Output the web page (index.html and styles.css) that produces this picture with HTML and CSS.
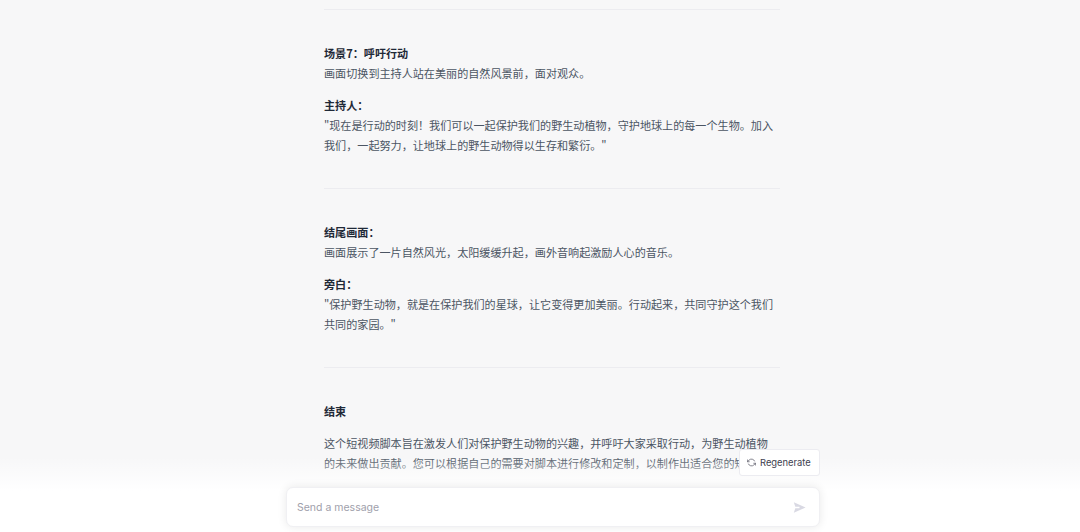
FILE: index.html
```html
<!DOCTYPE html>
<html lang="zh">
<head>
<meta charset="utf-8">
<title>Chat</title>
<link rel="stylesheet" href="styles.css">
</head>
<body>
<main class="thread">
  <article class="answer">
    <hr class="rule">
    <p class="para"><strong>场景7&#xFF1A;呼吁行动</strong><br>画面切换到主持人站在美丽的自然风景前&#xFF0C;面对观众。</p>
    <p class="para"><strong>主持人&#xFF1A;</strong><br>"现在是行动的时刻&#xFF01;我们可以一起保护我们的野生动植物&#xFF0C;守护地球上的每一个生物。加入我们&#xFF0C;一起努力&#xFF0C;让地球上的野生动物得以生存和繁衍。"</p>
    <hr class="rule">
    <p class="para"><strong>结尾画面&#xFF1A;</strong><br>画面展示了一片自然风光&#xFF0C;太阳缓缓升起&#xFF0C;画外音响起激励人心的音乐。</p>
    <p class="para"><strong>旁白&#xFF1A;</strong><br>"保护野生动物&#xFF0C;就是在保护我们的星球&#xFF0C;让它变得更加美丽。行动起来&#xFF0C;共同守护这个我们共同的家园。"</p>
    <hr class="rule">
    <p class="para"><strong>结束</strong></p>
    <p class="para">这个短视频脚本旨在激发人们对保护野生动物的兴趣&#xFF0C;并呼吁大家采取行动&#xFF0C;为野生动植物的未来做出贡献。您可以根据自己的需要对脚本进行修改和定制&#xFF0C;以制作出适合您的短片</p>
  </article>
</main>
<footer class="composer">
  <div class="actions">
    <button class="regen" type="button">
      <svg class="regen-icon" viewBox="0 0 24 24" aria-hidden="true"><path d="M1 4v6h6M23 20v-6h-6"/><path d="M20.5 9A9 9 0 0 0 5.6 5.6L1 10m22 4-4.6 4.4A9 9 0 0 1 3.5 15"/></svg>
      <span>Regenerate</span>
    </button>
  </div>
  <div class="inputbox">
    <span class="placeholder">Send a message</span>
    <svg class="send" viewBox="0 0 16 16" aria-hidden="true"><path d="M1 1.5 15.5 8 1 14.5 2.8 9H8V7H2.8z"/></svg>
  </div>
</footer>
</body>
</html>
```
FILE: styles.css
```css
* { box-sizing: border-box; }
html, body { margin: 0; height: 532px; overflow: hidden; }
body {
  position: relative;
  background: #f7f7f8;
  color: #4b5563;
  font-family: "Noto Sans CJK SC", Inter, sans-serif;
  font-size: 11.1px;
  line-height: 20px;
}
.thread { display: flex; justify-content: center; padding: 9px 0 0 24px; }
.answer { width: 456px; }
.rule { border: 0; border-top: 1px solid #ececf0; margin: 0 0 33px; }
.para { margin: 0 0 12px; padding-right: 2px; }
.para + .rule { margin-top: 33px; }
.para strong { color: #1f2937; font-weight: 700; }
.composer {
  position: absolute;
  left: 0; right: 0; bottom: 0;
  height: 92px;
  display: flex;
  flex-direction: column;
  align-items: center;
  justify-content: flex-end;
  padding: 0 0 5px 26px;
  background: linear-gradient(180deg, rgba(255,255,255,0) 18%, #fff 55%);
}
.actions { width: 534px; display: flex; justify-content: flex-end; margin-bottom: 11px; }
.regen {
  display: flex; align-items: center; gap: 4px;
  height: 27px; width: 81px; padding: 0 7px;
  background: #fff;
  border: 1px solid #ececf1;
  border-radius: 3px;
  color: #40414f;
  font: 400 9.4px Inter, sans-serif;
}
.regen-icon { width: 9px; height: 9px; flex: none; fill: none; stroke: #5d5d6b; stroke-width: 2; }
.inputbox {
  width: 534px; height: 40px;
  display: flex; align-items: center; justify-content: space-between;
  padding: 0 13px 0 10px;
  background: #fff;
  border-radius: 7px;
  border: 1px solid #f0f0f3;
  box-shadow: 0 0 10px rgba(0,0,0,.09);
}
.placeholder { color: #a0a0ab; font: 400 10.5px Inter, sans-serif; }
.send { width: 13px; height: 13px; fill: #d9d9e3; }
```
